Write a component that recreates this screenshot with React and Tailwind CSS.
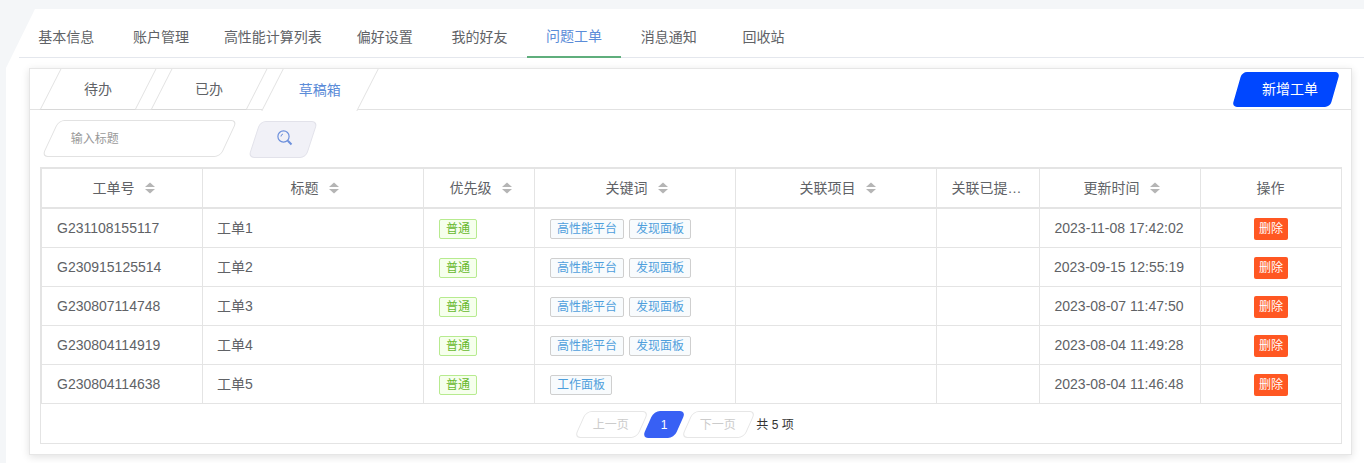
import React from 'react';

const navItems = ['基本信息', '账户管理', '高性能计算列表', '偏好设置', '我的好友', '问题工单', '消息通知', '回收站'];

const columns = [
    { title: '工单号', width: 'w-[162px]', sort: true, pad: 'pl-[3px]' },
    { title: '标题', width: 'w-[221px]', sort: true, pad: 'pl-[3px]' },
    { title: '优先级', width: 'w-[111px]', sort: true, pad: 'pl-[3px]' },
    { title: '关键词', width: 'w-[201px]', sort: true, pad: 'pl-[3px]' },
    { title: '关联项目', width: 'w-[201px]', sort: true, pad: 'pl-[3px]' },
    { title: '关联已提…', width: 'w-[103px]', pad: 'pr-[3px]' },
    { title: '更新时间', width: 'w-[161px]', sort: true, pad: 'pl-[3px]' },
    { title: '操作', width: 'w-[140px]', pad: 'pr-px' },
];

const rows = [
    { id: 'G231108155117', title: '工单1', tags: ['高性能平台', '发现面板'], time: '2023-11-08 17:42:02' },
    { id: 'G230915125514', title: '工单2', tags: ['高性能平台', '发现面板'], time: '2023-09-15 12:55:19' },
    { id: 'G230807114748', title: '工单3', tags: ['高性能平台', '发现面板'], time: '2023-08-07 11:47:50' },
    { id: 'G230804114919', title: '工单4', tags: ['高性能平台', '发现面板'], time: '2023-08-04 11:49:28' },
    { id: 'G230804114638', title: '工单5', tags: ['工作面板'], time: '2023-08-04 11:46:48' },
];

const SortIcon = () => (
    <svg width="10" height="12" viewBox="0 0 10 12" className="ml-[10px] shrink-0">
        <path d="M5 0.5 L10 5 L0 5 Z" fill="#b5b5b5" />
        <path d="M0 7 L10 7 L5 11.5 Z" fill="#b5b5b5" />
    </svg>
);

const SearchIcon = () => (
    <svg width="18" height="18" viewBox="0 0 18 18" fill="none">
        <circle cx="7.5" cy="7.5" r="5.6" stroke="#6d90dc" strokeWidth="1.2" />
        <path d="M5 7.5 A2.6 2.6 0 0 1 7 5" stroke="#6d90dc" strokeWidth="1" />
        <path d="M11.8 11.8 L15.5 15.5" stroke="#6d90dc" strokeWidth="2" />
    </svg>
);

const SubTab = ({ label, active }) => (
    <div
        className={`w-[96px] flex items-center justify-center skew-x-[-27deg] border-l border-r border-[#e2e2e2] ${active ? 'h-[42px] bg-white text-[#5b8cd8] relative' : 'h-[41px] text-[#606266] border-b border-b-[#d8d8d8]'}`}
    >
        <span className="skew-x-[27deg] text-[14px]">{label}</span>
    </div>
);

const PageButton = ({ label, active }) => (
    <div
        className={`flex items-center justify-center h-[27px] rounded-[6px] skew-x-[-24deg] text-[12px] ${active ? 'w-[32px] bg-[#3860f4] text-white' : 'w-[63px] bg-white border border-[#e6e6e6] text-[#cccccc]'}`}
    >
        <span className="skew-x-[24deg]">{label}</span>
    </div>
);

export default function App() {
    return (
        <div className="h-[463px] overflow-hidden bg-[#f4f6f8] pt-[9px] pl-[6px] font-['Liberation_Sans','Noto_Sans_CJK_SC',sans-serif] text-[14px] text-[#606266]">
            <div className="h-[454px] bg-white [clip-path:polygon(29px_0,100%_0,100%_100%,0_100%,0_59px)]">
                <div className="ml-[13px] pt-[7px] flex h-[49px] border-b border-[#e4e7ed]">
                    {navItems.map((item) => (
                        <div
                            key={item}
                            className={`min-w-[94.7px] h-[42px] px-[15.5px] flex items-center justify-center ${item === '问题工单' ? 'text-[#5b8cd8] border-b-2 border-[#5fae7c]' : ''}`}
                        >
                            {item}
                        </div>
                    ))}
                </div>

                <div className="ml-[23px] mr-[12px] mt-[10px] h-[387px] bg-white border border-[#e6e6e6] shadow-[0_2px_8px_rgba(0,0,0,0.12)]">
                    <div className="flex justify-between h-[41px] border-b border-[#e2e2e2]">
                        <div className="flex gap-[15px] pl-[20px]">
                            <SubTab label="待办" />
                            <SubTab label="已办" />
                            <SubTab label="草稿箱" active />
                        </div>
                        <div className="pr-[16px] pt-[3px]">
                            <button className="w-[98px] h-[35px] rounded-[5px] bg-[#0047ff] text-white skew-x-[-16deg]">
                                <span className="block skew-x-[16deg] pl-[8px]">新增工单</span>
                            </button>
                        </div>
                    </div>

                    <div className="flex pl-[20px] pt-[10px] h-[57px]">
                        <div className="w-[179px] h-[37px] rounded-[6px] border border-[#e2e2e2] skew-x-[-25deg] flex items-center pl-[20px]">
                            <span className="skew-x-[25deg] text-[12px] text-[#999999]">输入标题</span>
                        </div>
                        <button className="ml-[25px] mt-[1px] w-[58px] h-[37px] rounded-[6px] bg-[#f1f1f7] border border-[#e2e2ea] skew-x-[-18deg] flex items-center justify-center">
                            <span className="skew-x-[18deg] pl-[4px] pb-[3px]"><SearchIcon /></span>
                        </button>
                    </div>

                    <div className="ml-[10px] mr-[9px] h-[277px] border border-[#e4e4e4]">
                        <table className="table-fixed w-[1300px] border-separate border-spacing-0">
                            <thead>
                                <tr>
                                    {columns.map((col) => (
                                        <th
                                            key={col.title}
                                            className={`${col.width} h-[41px] p-0 font-normal border-t border-b-2 border-r border-[#e4e4e4] first:border-l first:border-l-[#e4e4e4] last:border-r-0`}
                                        >
                                            <div className={`flex items-center justify-center ${col.pad}`}>
                                                <span>{col.title}</span>
                                                {col.sort && <SortIcon />}
                                            </div>
                                        </th>
                                    ))}
                                </tr>
                            </thead>
                            <tbody>
                                {rows.map((row) => (
                                    <tr key={row.id}>
                                        <td className="h-[39px] pl-[15px] border-b border-r border-l border-[#e4e4e4]">{row.id}</td>
                                        <td className="pl-[14px] border-b border-r border-[#e4e4e4]">{row.title}</td>
                                        <td className="pl-[15px] border-b border-r border-[#e4e4e4]">
                                            <span className="inline-flex items-center justify-center w-[38px] h-[20px] rounded-[2px] border border-[#b7eb8f] bg-[#f6ffed] text-[12px] text-[#67b82e]">普通</span>
                                        </td>
                                        <td className="pl-[15px] pt-[2px] border-b border-r border-[#e4e4e4]">
                                            <div className="flex gap-[5px]">
                                                {row.tags.map((tag) => (
                                                    <span key={tag} className="inline-flex items-center h-[20px] px-[6px] rounded-[2px] border border-[#cfcfcf] bg-[#f8fbfd] text-[12px] text-[#4f9fdc]">{tag}</span>
                                                ))}
                                            </div>
                                        </td>
                                        <td className="border-b border-r border-[#e4e4e4]"></td>
                                        <td className="border-b border-r border-[#e4e4e4]"></td>
                                        <td className="text-center pr-[2px] border-b border-r border-[#e4e4e4]">{row.time}</td>
                                        <td className="text-center pt-[2px] border-b border-[#e4e4e4]">
                                            <button className="w-[34px] h-[22px] rounded-[2px] bg-[#ff5722] text-white text-[12px]">删除</button>
                                        </td>
                                    </tr>
                                ))}
                            </tbody>
                        </table>
                        <div className="flex justify-center pt-[7px] pr-[8px]">
                            <PageButton label="上一页" />
                            <div className="ml-[5px]"><PageButton label="1" active /></div>
                            <div className="ml-[7px]"><PageButton label="下一页" /></div>
                            <span className="ml-[6px] h-[27px] flex items-center text-[12px] text-[#333333]">共 5 项</span>
                        </div>
                    </div>
                </div>
            </div>
        </div>
    );
}
